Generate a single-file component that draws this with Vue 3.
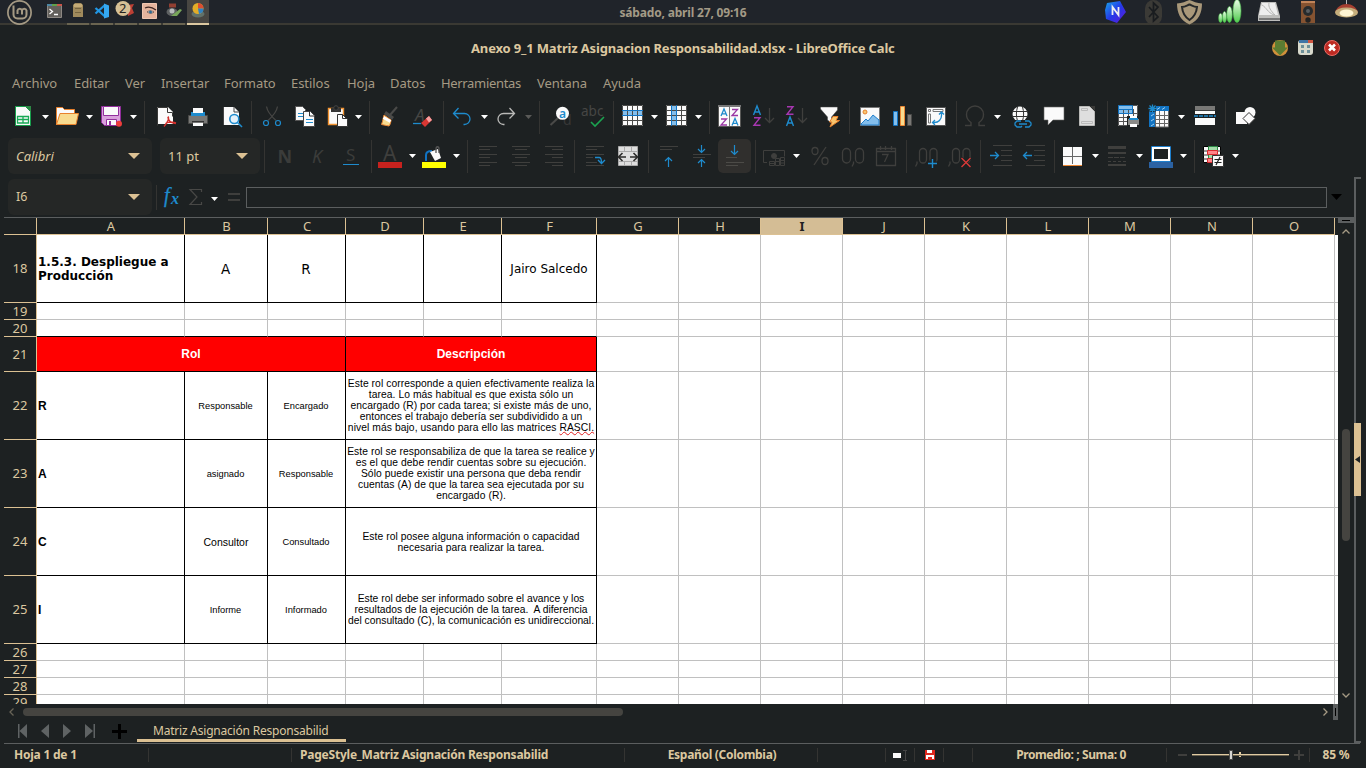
<script setup>
const t = (x, y, s, size, fill, extra = '') =>
  `<text x="${x}" y="${y}" font-family="Noto Sans, sans-serif" font-size="${size}" fill="${fill}" ${extra}>${s}</text>`
const lines = (list, color = '#3f3f3d') =>
  `<path stroke="${color}" d="${list.map(([x1, x2, y]) => `M${x1} ${y}.5H${x2}`).join('')}"/>`

const icons = {
  new: '<path fill="#fafafa" stroke="#169e4b" d="M4.500 1.500h10l5 5v14h-15z"/><path fill="#2d8a46" d="M14 1h6v6z"/><path fill="none" stroke="#18a955" stroke-width="1.300" d="M6.500 11.500h11v6.500h-11zM6.500 14.500h11M12 11.500v6.500"/>',
  open: '<path fill="#fafafa" stroke="#e8812c" d="M1.500 20V2.500h6l2 2h10v4"/><path fill="#f8db8f" stroke="#e8812c" d="M1.500 19.500L5 8.500h18.500L21 19.500z"/>',
  save: '<path fill="#d9a0dc" stroke="#922e9c" d="M2.500 1.500h19v19h-16l-3-3z"/><path fill="#fafafa" stroke="#922e9c" d="M4.500 1.500h15v9h-15zM7.500 14.500h10v6h-10z"/><path fill="#922e9c" d="M10 16h2v5h-2z"/><circle cx="20" cy="18.700" r="3" fill="#ed3d3b"/>',
  pdf: '<path fill="#fafafa" d="M4 2h11l5 5v12H4z"/><path fill="none" stroke="#3a3a38" d="M4.500 20.500v-18h10v5h5v4"/><path fill="none" stroke="#d22f2c" stroke-width="1.500" d="M15 11.500c1.500 2-.500 6-4 10M15 12c0 3.500 3 6 8 6.500M12.500 18.500c3-2 6.500-2 10.500-.500"/>',
  print: '<path fill="#fafafa" d="M7 3h10v5H7zM7 17h10v4H7z"/><path fill="#787876" stroke="#4a4a48" d="M2.500 10.500h19v8h-19z"/><path fill="#1e8bcd" d="M5 7h2v1h10V7h2v4H5z"/><path fill="#fafafa" d="M7 17.500h10V21H7z"/><path fill="#333" d="M6 16h12v1.500H6z"/>',
  preview: '<path fill="#fafafa" d="M5 2h10l5 5v13H5z"/><path fill="none" stroke="#444" d="M4.500 20v-18M15 2v5h5"/><circle cx="15.300" cy="14" r="4.500" fill="#e5f1fa" stroke="#1e8bcd" stroke-width="1.600"/><path stroke="#1e8bcd" stroke-width="1.600" d="M18.500 17.500l4.500 4.500"/>',
  cut: '<g fill="none" stroke="#464644" stroke-width="1.300"><path d="M6.500 1.500c1 6 5 10 9.500 14M17.500 1.500c-1 6-5 10-9.500 14"/></g><g fill="none" stroke="#1e8bcd" stroke-width="1.200"><circle cx="6" cy="18" r="2.500"/><circle cx="18" cy="18" r="2.500"/></g>',
  copy: '<path fill="#fafafa" stroke="#555" d="M2.500 1.500h7l3 3v11h-10z"/><path stroke="#1e8bcd" d="M5 8.500h5M5 11.500h5"/><path fill="#fafafa" stroke="#444" d="M10.500 6.500h7l4 4v11h-11z"/><path stroke="#1e8bcd" d="M13 14.500h7M13 17.500h7"/><path fill="none" stroke="#333" d="M16.500 6v5h5"/>',
  paste: '<path fill="#fafafa" stroke="#f29330" stroke-width="1.400" d="M4.500 3.500h15v16h-15z"/><path fill="#333" d="M7 3h10v4H7z"/><circle cx="12" cy="3" r="2.300" fill="#1d2122" stroke="#444"/><path fill="#fafafa" stroke="#333" d="M13.500 9.500h5l5 5v7h-10z"/><path fill="none" stroke="#333" d="M18.500 9.500v4h5"/>',
  clone: '<path stroke="#4a4a48" stroke-width="2" d="M19 2l-7 8"/><path fill="#4a4a48" d="M8 6l8 6-2 3-8-6z"/><path fill="#f8db8f" stroke="#ed8733" d="M6 10l7 5c0 2-1 5-2 6L3.500 19.500l1-3z"/><path stroke="#fff" stroke-width="3" d="M5.500 12.500l7 4"/>',
  clear: t(4, 16, 'A', 17, '#464644', 'font-style="italic"') + '<path stroke="#1e8bcd" stroke-width="1.300" d="M2 18.500h8"/><path fill="#d93733" d="M10 18l8-7 3 4-7 7z"/><path fill="#f7a0a0" d="M15 13.500l3-2.500 3 4-3 2.500z"/>',
  undo: '<path fill="none" stroke="#1e8bcd" stroke-width="1.300" d="M8.500 3L3.500 8.500l5 5M4 8.500h10.500a5.500 5.500 0 0 1 0 11h-1"/>',
  redo: '<path fill="none" stroke="#b9b9b7" stroke-width="1.300" d="M15.500 3l5 5.500-5 5M20 8.500H9.500a5.500 5.500 0 0 0 0 11h1"/>',
  find: t(15, 20, 'd', 14, '#383838') + '<path stroke="#4a4a48" stroke-width="2" d="M2.500 20L10 13"/><circle cx="14.500" cy="8.300" r="6.500" fill="#fafafa"/>' + t(11, 12.500, 'a', 12, '#1e8bcd', 'font-weight="600"'),
  spell: t(0, 11, 'abc', 13.500, '#464644') + '<path fill="none" stroke="#1ba350" stroke-width="1.600" d="M10 17l4 4 9-9"/>',
  rows: '<path fill="#fafafa" d="M2 0h21v21H2z"/><path fill="#83beec" d="M2 5h21v5H2z"/><path fill="none" stroke="#4a4a48" d="M2.500 .500h20v20h-20zM2 15.500h21M7.500 0v21M12.500 0v21M17.500 0v21"/><path fill="none" stroke="#1173c2" d="M2 5.500h21M2 10.500h21"/>',
  cols: '<path fill="#fafafa" d="M2 0h21v21H2z"/><path fill="#83beec" d="M8 0h5v21H8z"/><path fill="none" stroke="#4a4a48" d="M2.500 .500h20v20h-20zM2 5.500h21M2 10.500h21M2 15.500h21M17.500 0v21"/><path fill="none" stroke="#1173c2" d="M7.500 0v21M12.500 0v21"/>',
  sort: '<path fill="#fafafa" stroke="#595957" d="M.500 .500h22v21h-22z"/><path stroke="#777" stroke-width="2" d="M0 1h23"/><path stroke="#777" d="M11.500 1v20"/><g fill="none" stroke-width="1.300"><path stroke="#1e8bcd" d="M3 11l3-7 3 7M4 8.800h4M14 20.500l3-7 3 7M15 18.300h4"/><path stroke="#9a37a4" d="M14 4.500h5.500L14 10.500h6M3 14h5.500L3 20h6"/></g>',
  az: '<path fill="none" stroke="#1e8bcd" stroke-width="1.400" d="M2.500 10L6 1l3.500 9M3.500 7h5"/><path fill="none" stroke="#a737b1" stroke-width="1.400" d="M3 12.700h6L3 20.300h6.500"/><path fill="none" stroke="#3f3f3d" stroke-width="1.300" d="M18.500 3v14.500M14 13l4.500 4.500L23 13"/>',
  za: '<path fill="none" stroke="#a737b1" stroke-width="1.400" d="M3 1.700h6L3 9.300h6.500"/><path fill="none" stroke="#1e8bcd" stroke-width="1.400" d="M2.500 21L6 12l3.500 9M3.500 18h5"/><path fill="none" stroke="#3f3f3d" stroke-width="1.300" d="M18.500 3v14.500M14 13l4.500 4.500L23 13"/>',
  filter: '<path fill="#fafafa" stroke="#444" stroke-width=".500" d="M3.500 2h17v3l-6 7v6l-4-3v-3l-7-8z"/><path fill="#f8c66f" stroke="#e8812c" d="M16 11.500h5l-2 4h3.500L13 22l2-5h-2.500z"/>',
  image: '<path fill="#fafafa" stroke="#777" d="M2.500 2.500h19v18h-19z"/><circle cx="7" cy="7" r="2" fill="#f8c66f" stroke="#e8812c"/><path fill="#83beec" stroke="#1e7fcd" d="M3 19l5-5 2 2 5-6 6 5v5H3z"/>',
  chart: '<path fill="#83beec" stroke="#1173c2" d="M2.500 6.500h4v14h-4z"/><path fill="#f8db8f" stroke="#ed8733" d="M9.500 1.500h4v19h-4z"/><path fill="#797774" stroke="#4a4a48" d="M16.500 9.500h4v11h-4z"/>',
  pivot: '<path fill="#fafafa" stroke="#555" d="M2.500 2.500h19v18h-19z"/><path fill="none" stroke="#777" d="M4.500 4.500h2v2h-2zM9 4.500h10v2H9zM4.500 9v9h2V9z"/><path fill="none" stroke="#1e8bcd" stroke-width="1.300" d="M15 9.500l2.500-2.500 2.500 2.500M17.500 7.500v3c0 4-3 7-7 7h-2M11 15l-2.500 2.500L11 20"/>',
  omega: '<path fill="none" stroke="#3f3f3d" stroke-width="1.400" d="M2 20.500h6v-3c-3-2-4.500-5-4.500-8a8.500 8.500 0 0 1 17 0c0 3-1.500 6-4.500 8v3h6"/>',
  link: '<circle cx="11" cy="9" r="7.500" fill="#fafafa"/><path fill="none" stroke="#333" d="M3 6.500h16M3 11.500h16M8.500 2c-1.500 5-1.500 9 0 14M13.500 2c1.500 5 1.500 9 0 14"/><path fill="#1d2122" d="M4 15h20v8H4z"/><path fill="none" stroke="#1e8bcd" stroke-width="1.300" d="M12 16H8l-2 2v2l2 2h4l1-1M16 16h4l2 2v2l-2 2h-4M10 19h8"/>',
  comment: '<path fill="#fafafa" stroke="#666" stroke-width=".600" d="M2 2h20v13H11l-5 5v-5H2z"/>',
  header: '<path fill="#dedede" stroke="#b9b9b7" d="M4.500 1.500h10l5 5v14h-15z"/><path fill="none" stroke="#bbb" d="M6.500 3.500h6v2h-6zM6.500 16.500h11v2h-11z"/><path fill="#3a3a38" d="M15 1h5v5z"/>',
  range: '<path fill="#fafafa" d="M2 0h20v21H2z"/><path fill="#83beec" d="M2 0h15v9H2z"/><path fill="none" stroke="#555" d="M2.500 .500h19v20h-19zM2 8.500h20M2 12.500h20M2 16.500h20M7.500 4v16M12.500 4v16M17.500 4v16"/><path fill="none" stroke="#1173c2" d="M2.500 8.500v-8h14v8zM2 4.500h15"/><path fill="#1d2122" d="M11 11h13v12H11z"/><path fill="#8a8a88" d="M12 14h11v6H12z"/><path fill="#fff" d="M14 11h7v3h-7zM14 19h7v3h-7z"/><path fill="#1e8bcd" d="M13 13h9v2h-9z"/>',
  freeze: '<path fill="#fafafa" d="M2 1h20v21H2z"/><path fill="#1173c2" d="M8 1h14v5H8zM2 7h6v15H2z"/><path fill="none" stroke="#666" d="M8 10.500h14M8 14.500h14M8 18.500h14M12.500 6v16M17.500 6v16M8.500 6v16h13V6"/><path fill="none" stroke="#9fceef" d="M10 4.500l3-2M15 4.500l3-2M4 11l3-2M4 16l3-2M4 21l3-2"/><path fill="#1d2122" d="M1 0h8v7H1z"/><path fill="none" stroke="#1e8bcd" stroke-width="1.300" d="M5.500-.500v8M1.500 3.500h8M2.500 .500l6 6M8.500 .500l-6 6"/>',
  split: '<path fill="#fafafa" d="M2 1h20v19H2z"/><path fill="#787876" d="M2 1h20v4H2z"/><path fill="none" stroke="#444" d="M2 5.500h20"/><path fill="#1d2122" d="M2 9h20v4H2z"/><path stroke="#1e8bcd" stroke-width="1.300" stroke-dasharray="4 1" d="M1 11h22"/>',
  shapes: '<circle cx="16" cy="7.500" r="5.500" fill="#fafafa"/><path fill="#fafafa" d="M2 7h11v12H2z"/><path fill="#fafafa" stroke="#333" d="M15 7.500l6 6-6 6-6-6z"/>',

  bold: t(4.500, 18.500, 'N', 18, '#3b3c3a', 'font-weight="bold"'),
  italic: t(6, 18.500, 'K', 18, '#3b3c3a', 'font-style="italic"'),
  underline: t(7, 17, 'S', 17, '#3b3c3a') + '<path stroke="#1e8bcd" d="M4 20.500h16"/>',
  color: t(5, 17, 'A', 21, '#3f3f3d') + '<path fill="#c7221e" d="M0 18h24v6H0z"/>',
  fill: '<path fill="#ffff00" d="M0 18h24v6H0z"/><path fill="none" stroke="#1173c2" stroke-width="2" d="M4 17v-6c0-3 2-4 6-4"/><path fill="#fafafa" d="M8 8l8-3 3 9-6 3z"/><path fill="none" stroke="#555" stroke-width="1.300" d="M14 9V5c0-3 3-3 3 0v4"/>',
  left: lines([[3, 21, 2], [3, 14, 5], [3, 21, 10], [3, 14, 13], [3, 21, 18], [3, 14, 21]]),
  center: lines([[3, 21, 2], [6, 18, 5], [3, 21, 10], [6, 18, 13], [3, 21, 18], [6, 18, 21]]),
  right: lines([[3, 21, 2], [10, 21, 5], [3, 21, 10], [10, 21, 13], [3, 21, 18], [10, 21, 21]]),
  wrap: lines([[3, 21, 2], [3, 14, 5], [3, 21, 10], [3, 10, 13], [3, 14, 18], [3, 21, 21]]) + '<path fill="none" stroke="#1e8bcd" stroke-width="1.300" d="M12 13.500h4c2 0 2.500 2 2.500 5M15 16l3.500 3.500L22 16"/>',
  merge: '<path fill="#dedede" stroke="#aaa" d="M2.500 2.500h19v19h-19z"/><path fill="none" stroke="#aaa" d="M2 7.500h20M2 17.500h20M8.500 2v5M15.500 2v5M8.500 17v5M15.500 17v5"/><path fill="none" stroke="#2c2c2b" stroke-width="1.600" d="M2.500 13h7.500M14 13h7.500M6.500 9l-4 4 4 4M17.500 9l4 4-4 4"/>',
  top: lines([[3, 21, 2], [3, 15, 5]]) + '<path fill="none" stroke="#1e8bcd" stroke-width="1.200" d="M11.500 23V13.500M8 17l3.500-3.500L15 17"/>',
  middle: lines([[3, 21, 10], [3, 15, 13]]) + '<path fill="none" stroke="#1e8bcd" stroke-width="1.200" d="M11.500 1v7.500M8 5l3.500 3.500L15 5M11.500 23v-7.500M8 19l3.500-3.500L15 19"/>',
  bottom: lines([[3, 14, 13], [3, 21, 18], [3, 15, 21]], '#4c4b47') + '<path fill="none" stroke="#1e8bcd" stroke-width="1.200" d="M11.500 1v9.500M8 7l3.500 3.500L15 7"/>',
  money: '<g fill="none" stroke="#3f3f3d"><path d="M5 18.500H1.500v-12h21v6"/><circle cx="12" cy="12" r="2.500" fill="#3f3f3d"/><path d="M7.500 17.500v4h5v-4zM7.500 19.500h5M13.500 14.500v7h4v-7zM13.500 17.500h4M18.500 13.500v8h4v-8zM18.500 16.500h4M18.500 19h4"/></g>',
  percent: '<g fill="none" stroke="#3f3f3d" stroke-width="1.300"><ellipse cx="7" cy="7" rx="3" ry="3.500"/><ellipse cx="17" cy="17" rx="3" ry="3.500"/><path d="M18 3L6 21"/></g>',
  decimal: '<g fill="none" stroke="#3f3f3d" stroke-width="1.300"><rect x="1.500" y="4.500" width="8" height="14.500" rx="4"/><rect x="14.500" y="4.500" width="8" height="14.500" rx="4"/><path d="M12.500 17.500v2l-1.500 3"/></g>',
  date: '<g fill="none" stroke="#3f3f3d" stroke-width="1.300"><path d="M2.500 4.500h19v17h-19zM2 7.500h20M6.500 2v4M11.500 2v4M17.500 2v4M8 10.500h6L10.500 18"/></g>',
  addDec: '<g fill="none" stroke="#3f3f3d" stroke-width="1.300"><rect x="4.500" y="4.500" width="7" height="14.500" rx="3.500"/><rect x="15" y="4.500" width="7" height="14.500" rx="3.500"/><path d="M2 17.500v2L.500 22.500"/></g><path stroke="#1d2122" stroke-width="4" d="M17.500 15v9M13 19.500h9"/><path stroke="#1e8bcd" stroke-width="1.400" d="M17.500 15v9M13 19.500h9"/>',
  delDec: '<g fill="none" stroke="#3f3f3d" stroke-width="1.300"><rect x="4.500" y="4.500" width="7" height="14.500" rx="3.500"/><rect x="15" y="4.500" width="7" height="14.500" rx="3.500"/><path d="M2 17.500v2L.500 22.500"/></g><path stroke="#1d2122" stroke-width="3" d="M13.500 14l9 9M22.500 14l-9 9"/><path stroke="#d93a38" stroke-width="1.400" d="M13.500 14l9 9M22.500 14l-9 9"/>',
  indent: lines([[4, 23, 1], [12, 23, 6], [12, 23, 11], [12, 23, 16], [4, 23, 21]]) + '<path fill="none" stroke="#1e8bcd" stroke-width="1.300" d="M1 11.500h8.500M6 8l3.500 3.500L6 15"/>',
  outdent: lines([[4, 23, 1], [12, 23, 6], [12, 23, 11], [12, 23, 16], [4, 23, 21]]) + '<path fill="none" stroke="#1e8bcd" stroke-width="1.300" d="M10 11.500H1.500M5 8l-3.500 3.500L5 15"/>',
  borders: '<path fill="#fafafa" d="M2 3h19v18H2z"/><path stroke="#666" d="M11.500 3v17M2 12.500h19"/><path fill="#ed8733" d="M2 21h19v1H2z"/>',
  lineStyle: '<path fill="#3f3f3d" d="M3 2h18v3H3zM3 8h18v2H3zM3 20h18v2H3z"/><path stroke="#3f3f3d" stroke-dasharray="5 1" d="M3 13.500h18"/><path stroke="#3f3f3d" stroke-dasharray="3 2" d="M3 17.500h18"/>',
  borderColor: '<path fill="none" stroke="#1e7fcd" d="M2.500 2.500h19v15h-19z"/><path fill="none" stroke="#fff" stroke-width="2" d="M4 4h16v12H4z"/><path fill="#2b62a3" d="M0 18h24v6H0z"/>',
  cond: '<path fill="#fafafa" stroke="#000" d="M2.500 2.500h17v16h-17z"/><path fill="none" stroke="#333" d="M2 7h18M2 11h18M2 15h18"/><path fill="#a3dba9" stroke="#2d8a46" d="M7.500 2.500h9v4h-9zM7.500 10.500h5v4h-5z"/><path fill="#ff8589" stroke="#d92a2f" d="M6.500 6.500h10v4h-10zM6.500 14.500h5v4h-5z"/><path fill="#fafafa" stroke="#333" d="M11.500 11.500h11v11h-11z"/><path stroke="#222" stroke-width="1.200" d="M13.500 15.500h7M13.500 18.500h7M19 13l-4 8"/>',
}

const mainBar = 'new+ open+ save+ | pdf print preview | cut copy paste+ | clone clear | undo+ redo- | find spell | rows+ cols+ | sort az za filter | image chart pivot | omega+ link comment header | range freeze+ split | shapes'
const formatBar = '| bold italic underline | color+ fill+ | left center right | wrap merge | top middle bottom* | money+ percent decimal date | addDec delDec | indent outdent | borders+ lineStyle+ borderColor+ | cond+'
const parse = (s) =>
  s.split(' ').map((token) => ({
    name: token.replace(/[+\-*]$/, ''),
    sep: token === '|',
    drop: /[+-]$/.test(token),
    dim: token.endsWith('-'),
    active: token.endsWith('*'),
  }))
const mainTools = parse(mainBar)
const formatTools = parse(formatBar)

const menus = ['Archivo', 'Editar', 'Ver', 'Insertar', 'Formato', 'Estilos', 'Hoja', 'Datos', 'Herramientas', 'Ventana', 'Ayuda']
const columns = 'ABCDEFGHIJKLMNO'.split('')

const c = (text = '', cls = '', span = 1) => ({ text, cls, span })
const rows = [
  { n: 18, h: 'tall', cells: [c('1.5.3. Despliegue a\nProducción', 'k name dj'), c('A', 'k big'), c('R', 'k big'), c('', 'k'), c('', 'k'), c('Jairo Salcedo', 'k person')] },
  { n: 19, h: 'short', cells: [c(), c(), c(), c(), c(), c()] },
  { n: 20, h: 'short', cells: [c('', 'kb'), c('', 'kb'), c('', 'kb'), c('', 'kb'), c('', 'kb'), c('', 'kb')] },
  { n: 21, h: 'head', cells: [c('Rol', 'k red', 3), c('Descripción', 'k red', 3)] },
  { n: 22, h: 'tall', cells: [c('R', 'k name'), c('Responsable', 'k small'), c('Encargado', 'k small'), { cls: 'k desc', span: 3, lines: ['Este rol corresponde a quien efectivamente realiza la', 'tarea. Lo más habitual es que exista sólo un', 'encargado (R) por cada tarea; si existe más de uno,', 'entonces el trabajo debería ser subdividido a un', 'nivel más bajo, usando para ello las matrices '], tail: 'RASCI.' }] },
  { n: 23, h: 'tall', cells: [c('A', 'k name'), c('asignado', 'k small'), c('Responsable', 'k small'), { cls: 'k desc', span: 3, lines: ['Este rol se responsabiliza de que la tarea se realice y', 'es el que debe rendir cuentas sobre su ejecución.', 'Sólo puede existir una persona que deba rendir', 'cuentas (A) de que la tarea sea ejecutada por su', 'encargado (R).'] }] },
  { n: 24, h: 'tall', cells: [c('C', 'k name'), c('Consultor', 'k mid'), c('Consultado', 'k small'), { cls: 'k desc', span: 3, lines: ['Este rol posee alguna información o capacidad', 'necesaria para realizar la tarea.'] }] },
  { n: 25, h: 'tall', cells: [c('I', 'k name'), c('Informe', 'k small'), c('Informado', 'k small'), { cls: 'k desc snug', span: 3, lines: ['Este rol debe ser informado sobre el avance y los', 'resultados de la ejecución de la tarea.  A diferencia', 'del consultado (C), la comunicación es unidireccional.'] }] },
  { n: 26, h: 'short', cells: [c(), c(), c(), c(), c(), c()] },
  { n: 27, h: 'short', cells: [c(), c(), c(), c(), c(), c()] },
  { n: 28, h: 'short', cells: [c(), c(), c(), c(), c(), c()] },
  { n: 29, h: 'cutoff', cells: [c(), c(), c(), c(), c(), c()] },
]
</script>

<template>
  <div class="desktop">
    <header class="panel">
      <svg class="mint" viewBox="0 0 28 26"><g fill="none" stroke="#a59a84"><circle cx="13.500" cy="12.500" r="11.600" stroke-width="1.700" /><path stroke-width="2" d="M7.500 5.500v9a4 4 0 0 0 4 4h5a4 4 0 0 0 4-4v-4a2.300 2.300 0 0 0-4.500 0v4M16 14v-3.500a2.300 2.300 0 0 0-4.500 0V14" /></g></svg>
      <div class="tasks">
        <span class="task plain"><svg viewBox="0 0 22 23"><path fill="#63605c" stroke="#8d8883" d="M4.500 4.500h14v13h-14z" /><path fill="#4c86a3" d="M4 4h5v2H4z" /><path fill="#61a04a" d="M9 4h5v2H9z" /><path fill="#c9554a" d="M14 4h5v2h-5z" /><path fill="none" stroke="#fff" stroke-width="1.300" d="M6.500 9l3 2.500-3 2.500M11 14.500h4" /></svg></span>
        <span class="task"><svg viewBox="0 0 22 23"><path fill="#a08a5c" d="M6 5l2-2h6l2 2v12H6z" /><path fill="#c4ab77" d="M7 4h8v3H7z" /><path stroke="#75643f" d="M8 8.500h6M8 12.500h6" /></svg></span>
        <span class="task"><svg viewBox="0 0 22 23"><path fill="none" stroke="#2196e3" stroke-width="2.300" d="M14 5L4.500 13.500M4.500 8L14 16.500" /><path fill="#35a8f2" d="M13 3.500L18 5.500v11.500l-5 1.500z" /></svg></span>
        <span class="task"><svg viewBox="0 0 22 23"><path fill="#bd3f34" d="M12 5l7-1-2 4 2 5-6 3z" /><circle cx="8" cy="8.500" r="7.500" fill="#d6c096" /></svg><b class="count">2</b></span>
        <span class="task"><svg viewBox="0 0 22 23"><path fill="#e5b49d" stroke="#f0c6b0" d="M3.500 3.500h14v15h-14z" /><path fill="none" stroke="#3d2521" stroke-width="1.300" d="M6 8c3-1.500 7-1 11 2" /><path fill="#fff" stroke="#4b342e" stroke-width=".700" d="M8 12c3-2 5-1 7 0-3 2-5 1-7 0z" /><circle cx="11.500" cy="12" r="1.500" fill="#2d6a90" /></svg></span>
        <span class="task"><svg viewBox="0 0 22 23"><path fill="#913f32" d="M6 3.500h7v4H6z" /><ellipse cx="9" cy="12" rx="5.500" ry="4" fill="#5e6162" /><circle cx="9" cy="11" r="2.500" fill="#b9bdbd" /><path fill="#78a65a" d="M8 16l9-7 2 1-5 6z" /></svg></span>
        <span class="task open"><svg viewBox="0 0 22 23"><ellipse cx="11" cy="14" rx="6.500" ry="3.500" fill="#61716a" /><circle cx="11" cy="8.500" r="5.500" fill="#e2ad27" /><path fill="#dc4d31" d="M11 3a5.500 5.500 0 0 1 5.500 5.500H11z" /><path fill="#2f81c2" d="M16.500 8.500A5.500 5.500 0 0 1 12 14l-1-5.500z" /></svg></span>
      </div>
      <div class="clock">sábado, abril 27, 09:16</div>
      <svg class="tray" viewBox="0 0 262 24">
        <defs>
          <linearGradient id="pent" x2="1" y2="1"><stop stop-color="#18a7e8" /><stop offset=".5" stop-color="#2538e8" /><stop offset="1" stop-color="#6318d8" /></linearGradient>
          <linearGradient id="sig" y2="1" x2="0"><stop stop-color="#ecfbe9" /><stop offset="1" stop-color="#4ecb4c" /></linearGradient>
        </defs>
        <path fill="url(#pent)" d="M7 3l13-2 6 11-9 11-11-4-1-9z" /><path fill="none" stroke="#eee" stroke-width="1.800" d="M12.500 15V7l6 8V7" />
        <rect x="45" y="0" width="17" height="25" rx="8.500" fill="#3b3a36" /><path fill="none" stroke="#191c1f" stroke-width="1.700" d="M49 7l9 10-4.500 4V3l4.500 4-9 10" />
        <path fill="#a9987a" d="M77 3.500C82 3 86 1.500 89.500 0c3.500 1.500 7.500 3 12.500 3.500 0 9-3 17-12.500 21C80 20.500 77 12.500 77 3.500z" /><path fill="#a9987a" stroke="#25282a" stroke-width="2" d="M82 7c3 0 5-1.500 7.500-2.500C92 5.500 94 7 97 7c-.500 6-3 10-7.500 13C85 17 82.500 13 82 7z" />
        <g fill="url(#sig)" stroke="#48bd49" stroke-width=".600"><ellipse cx="120.500" cy="18" rx="1.800" ry="4.500" /><ellipse cx="124.500" cy="17" rx="2" ry="5.500" /><ellipse cx="129.500" cy="14.500" rx="2.700" ry="8" /><ellipse cx="137" cy="11" rx="4" ry="11.500" /></g>
        <path fill="#bdbdbb" d="M161 2h15l4 14v5h-22v-5z" /><path fill="#eee" d="M162 3h13l3 12h-19z" /><path fill="none" stroke="#b5b5b3" d="M162 5c5 3 5 7 12 10M169 3c-1 4 2 8 6 12" /><path fill="#777" d="M159 18h21v2h-21z" />
        <path fill="#855331" d="M201 1h14v22h-14z" /><path fill="#c18459" d="M201 1h14v2h-14z" /><circle cx="208" cy="11" r="5" fill="#272b2d" /><circle cx="208" cy="11" r="2" fill="#585d60" /><circle cx="208" cy="20" r="2.700" fill="#222" />
        <path stroke="#bbb" d="M246.500 0v5" /><path fill="#a53f31" d="M235 12c2-5 6-8 11.500-8S256 7 258 12z" /><ellipse cx="246.500" cy="12.500" rx="11.500" ry="5" fill="#c4ad7b" /><ellipse cx="246.500" cy="13" rx="7" ry="3.500" fill="#fff5d3" />
      </svg>
    </header>

    <div class="titlebar">
      <span class="title">Anexo 9_1 Matriz Asignacion Responsabilidad.xlsx - LibreOffice Calc</span>
      <svg class="winbtns" viewBox="0 0 72 18">
        <circle cx="9" cy="9" r="8" fill="#d2913b" /><path fill="#5b7d32" d="M4 1.500h10v7h3L9 16.500 1 8.500h3z" />
        <rect x="27" y="1" width="15" height="15" rx="3" fill="#d8d9cc" /><path fill="#3f75a6" d="M28 1h9v3h-9z" /><path fill="#cf5540" d="M37 1h5v3h-5z" /><path fill="#6d9099" d="M30 6h3v3h-3zM36 6h3v3h-3zM30 11h3v3h-3zM36 11h3v3h-3z" />
        <circle cx="61" cy="9" r="7.500" fill="#bd2a22" stroke="#ea6a64" /><path stroke="#fff" stroke-width="2.600" d="M58 5.500l6 6M64 5.500l-6 6" />
      </svg>
    </div>

    <nav class="menubar">
      <span v-for="m in menus" :key="m" :class="{ tight: m.length > 8 }">{{ m }}</span>
    </nav>

    <div class="toolbar main">
      <template v-for="(b, i) in mainTools" :key="i">
        <i v-if="b.sep" class="sep"></i>
        <span v-else class="tool" :class="{ drop: b.drop }">
          <svg class="icon" viewBox="0 0 24 24" v-html="icons[b.name]"></svg>
          <i v-if="b.drop" class="arrow" :class="{ dim: b.dim }"></i>
        </span>
      </template>
    </div>

    <div class="toolbar format">
      <div class="combo font"><em>Calibri</em><i class="caret"></i></div>
      <div class="combo size"><span>11 pt</span><i class="caret"></i></div>
      <template v-for="(b, i) in formatTools" :key="i">
        <i v-if="b.sep" class="sep"></i>
        <span v-else class="tool" :class="{ drop: b.drop, active: b.active }">
          <svg class="icon" viewBox="0 0 24 24" v-html="icons[b.name]"></svg>
          <i v-if="b.drop" class="arrow"></i>
        </span>
      </template>
    </div>

    <div class="workspace">
      <div class="document">
        <div class="formula">
          <div class="combo ref"><span>I6</span><i class="caret"></i></div>
          <i class="fsep"></i>
          <svg class="ftools" viewBox="0 0 84 36">
            <text x="6" y="23" font-family="Liberation Serif, serif" font-style="italic" font-size="20" fill="#1e8bcd" stroke="#1e8bcd" stroke-width=".3">f</text>
            <text x="13" y="25" font-family="Liberation Serif, serif" font-style="italic" font-weight="bold" font-size="16" fill="#1e8bcd">x</text>
            <path fill="none" stroke="#484846" stroke-width="1.200" d="M43.500 13v-2.500H32l7 7.500-7 7.500h11.500V23" />
            <path fill="#fff" d="M53 18h7l-3.500 4z" />
            <path fill="#3f3f3d" d="M70 14h12v2H70zM70 20h12v2H70z" />
          </svg>
          <div class="input"></div>
          <i class="expand"></i>
        </div>

        <div class="sheet">
          <div class="grid">
            <div class="line heads">
              <div class="rowhead"></div>
              <div v-for="col in columns" :key="col" class="colhead" :class="{ current: col === 'I' }">{{ col }}</div>
            </div>
            <div v-for="r in rows" :key="r.n" class="line" :class="r.h">
              <div class="rowhead">{{ r.n }}</div>
              <div v-for="(cell, i) in r.cells" :key="i" class="cell" :class="[cell.cls, { wide: cell.span === 3 }]">
                <div v-if="cell.lines">
                  <div v-for="(l, j) in cell.lines" :key="j" class="tl">{{ l }}<span v-if="cell.tail && j === cell.lines.length - 1" class="typo">{{ cell.tail }}</span></div>
                </div>
                <span v-else>{{ cell.text }}</span>
              </div>
              <div v-for="k in 9" :key="'e' + k" class="cell"></div>
              <div class="cell last"></div>
            </div>
          </div>
          <div class="vscroll">
            <i class="splitter"></i>
            <svg viewBox="0 0 8 5"><path d="M.5 4.500L4 1l3.500 3.500" /></svg>
            <i class="vthumb"></i>
            <svg viewBox="0 0 8 5"><path d="M.5 .5L4 4 7.500 .5" /></svg>
          </div>
        </div>

        <div class="hscroll">
          <svg class="hl" viewBox="0 0 5 8"><path d="M4.500 .5L1 4l3.500 3.500" /></svg>
          <i class="hthumb"></i>
          <svg class="hr" viewBox="0 0 5 8"><path d="M.5 .5L4 4 .5 7.500" /></svg>
          <i class="hsplit"></i>
        </div>

        <div class="tabs">
          <svg viewBox="0 0 116 16">
            <g fill="#5f6364"><path d="M4 1h1.500v14H4zM13 1v14L5.500 8zM35 1v14L27 8zM49 1v14l8-7zM71 1v14l8-7zM79.500 1H81v14h-1.500z" /></g>
            <path fill="#000" d="M98 7h15v3H98zM104 1h3v15h-3z" />
          </svg>
          <div class="tab">Matriz Asignación Responsabilid</div>
        </div>
      </div>
      <aside class="sidebar"><div class="handle"><i></i></div></aside>
    </div>

    <footer class="status">
      <span class="s1">Hoja 1 de 1</span>
      <span class="s2"></span>
      <span class="s3">PageStyle_Matriz Asignación Responsabilid</span>
      <span class="s4">Español (Colombia)</span>
      <span class="s5"></span>
      <span class="s6"><svg viewBox="0 0 16 11"><path fill="#fafafa" d="M1 3h8v5H1z" /><path fill="none" stroke="#444" d="M11 .5h4M13.500 .5v10M11 10.500h4" /></svg></span>
      <span class="s7"><svg viewBox="0 0 10 10"><path fill="#e0291f" d="M0 0h10v10H0z" /><path fill="#fff" d="M2 0h5v3H2zM1 5h8v4H7V7H3v2H1z" /></svg></span>
      <span class="s8"></span>
      <span class="s9">Promedio: ; Suma: 0</span>
      <span class="s10">
        <svg viewBox="0 0 141 18"><path fill="#3f3f3d" d="M10 8h9v2h-9zM126 8h10v2h-10zM130 4h2v10h-2z" /><path fill="#e0cba2" d="M24 8h97v1H24zM71 6h2v5h-2z" /><path fill="#6a6250" d="M24 9h97v1H24z" /><path fill="#d6d6d3" stroke="#4a4a48" d="M61.500 4.500h3v9h-3z" /></svg>
      </span>
      <span class="s11">85 %</span>
    </footer>
  </div>
</template>

<style>
html, body { margin: 0; background: #1d2122; overflow: hidden; }
</style>

<style scoped>
.desktop { width: 1366px; height: 768px; display: flex; flex-direction: column; background: #1d2122; color: #dcc8a0; font: 12.500px/16px "Noto Sans", sans-serif; overflow: hidden; }
.desktop * { box-sizing: border-box; }
svg { display: block; overflow: visible; flex: none; }
i { display: block; flex: none; }

.panel { height: 25px; flex: none; display: flex; background: #20242a; border-bottom: 2px solid #3a3933; }
.mint { width: 28px; height: 26px; margin-left: 6px; }
.tasks { display: flex; gap: 2px; margin-left: 9px; }
.task { position: relative; width: 22px; height: 25px; border-bottom: 2px solid #6a6450; }
.task.plain { border-color: transparent; }
.task.open { background: #484642; border-color: #dcc8a0; }
.task svg { width: 22px; height: 23px; }
.count { position: absolute; left: 4px; top: 0; color: #26241f; font-weight: 400; font-size: 13px; }
.clock { width: 128px; margin-left: 410px; height: 25px; line-height: 25px; text-align: center; color: #a39a86; font-weight: 700; font-size: 12px; letter-spacing: -0.180px; white-space: nowrap; }
.tray { width: 262px; height: 24px; margin-left: 353px; }

.titlebar { height: 47px; flex: none; display: flex; align-items: center; }
.title { width: 424px; margin-left: 471px; font-weight: 700; font-size: 13px; letter-spacing: -0.160px; white-space: nowrap; padding-bottom: 2px; }
.winbtns { width: 72px; height: 18px; margin-left: 376px; margin-bottom: 1px; }

.menubar { height: 25px; flex: none; display: grid; grid-template-columns: 62px 51px 36px 63px 67px 56px 43px 51px 96px 66px 50px; padding: 3px 0 0 12px; color: #a59a84; font-size: 13px; letter-spacing: -0.050px; }
.menubar span { white-space: nowrap; }
.menubar .tight { letter-spacing: -0.330px; }

.toolbar { display: flex; flex: none; align-items: center; padding-left: 8px; }
.main { height: 40px; }
.format { height: 38px; }
.tool { width: 33px; height: 34px; flex: none; display: flex; align-items: center; padding-left: 5px; border-radius: 5px; }
.tool.drop { width: 44px; padding-left: 3px; }
.tool.active { background: #302f2d; }
.icon { width: 24px; height: 24px; }
.arrow { width: 7px; height: 4px; margin-left: 7px; background: #fff; clip-path: polygon(0 0, 100% 0, 50% 100%); }
.arrow.dim { background: #5a5a58; }
.sep { width: 8px; height: 33px; background: linear-gradient(#343432, #343432) 4px 0 / 1px 100% no-repeat; }
.combo { height: 36px; flex: none; background: #252726; border-radius: 6px; display: flex; align-items: center; justify-content: space-between; padding: 0 12px 0 8px; }
.font { width: 144px; font-size: 13px; }
.size { width: 100px; margin-left: 8px; font-size: 13px; }
.caret { width: 12px; height: 6px; background: #dcc193; clip-path: polygon(0 0, 100% 0, 50% 100%); }

.workspace { height: 568px; flex: none; display: flex; }
.document { width: 1354px; display: flex; flex-direction: column; }
.formula { height: 42px; flex: none; display: flex; align-items: center; padding: 2px 0 0 8px; }
.ref { width: 144px; }
.fsep { width: 1px; height: 25px; margin: 0 4px; background: #343432; }
.ftools { width: 84px; height: 36px; margin-right: 1px; margin-left: -3px; }
.input { width: 1081px; height: 21px; border: 1px solid #5b5e5f; margin-left: 3px; }
.expand { width: 11px; height: 6px; margin-left: 4px; background: #000; clip-path: polygon(0 0, 100% 0, 50% 100%); }

.sheet { display: flex; height: 487px; flex: none; border-top: 1px solid #5b5e5f; margin-left: 4px; overflow: hidden; }
.grid { width: 1334px; flex: none; }
.line { display: grid; grid-template-columns: 33px 148px 83px repeat(3, 78px) 95px repeat(9, 82px) 3px; grid-template-rows: 100%; }
.heads { height: 17px; }
.tall { height: 68px; }
.short { height: 17px; }
.head { height: 35px; }
.cutoff { height: 9px; overflow: hidden; }
.rowhead, .colhead { border-right: 1px solid #dcc193; border-bottom: 1px solid #dcc193; display: flex; align-items: center; justify-content: center; font-size: 13px; line-height: 15px; min-height: 0; }
.cutoff .rowhead { align-items: flex-start; border-bottom: 0; }
.colhead { padding-left: 1px; }
.current { background: #d4bd95; color: #1d2122; font-weight: 700; }
.cell { background: #fff; color: #000; border-right: 1px solid #c0c0c0; border-bottom: 1px solid #c0c0c0; display: flex; align-items: center; justify-content: center; text-align: center; font-family: "Liberation Sans", Arial, sans-serif; min-width: 0; min-height: 0; }
.cutoff .cell { border-bottom: 0; }
.cell.last { border-right: 0; }
.wide { grid-column: span 3; }
.cell.k { border-color: #000; }
.cell.kb { border-bottom-color: #000; }
.name { justify-content: flex-start; text-align: left; font-weight: 700; font-size: 12px; padding-left: 1px; white-space: pre; }
.dj { font: 700 12px/14px "DejaVu Sans", sans-serif; }
.big { font: 13.500px/16px "DejaVu Sans", sans-serif; padding-right: 1px; }
.person { font: 12px/14px "DejaVu Sans", sans-serif; }
.red { background: #f00; color: #fff; font-weight: 700; font-size: 12px; }
.small { font-size: 9.300px; padding-right: 1px; }
.mid { font-size: 10.500px; }
.desc { font-size: 10.300px; line-height: 11px; letter-spacing: 0.070px; }
.snug { letter-spacing: 0.010px; }
.tl { white-space: pre; }
.typo { text-decoration: underline wavy #e02020 1px; text-underline-offset: 0; text-decoration-skip-ink: none; }

.vscroll { width: 16px; display: flex; flex-direction: column; align-items: center; }
.vscroll svg { width: 8px; height: 5px; }
.vscroll path, .hscroll path { fill: none; stroke: #a59a84; stroke-width: 1.300; }
.splitter { width: 16px; height: 5px; border: solid #5b5e5f; border-width: 2px 4px; background: #000; margin-bottom: 6px; }
.vthumb { width: 8px; height: 112px; border-radius: 4px; background: #454440; margin: 195px 0 152px; }

.hscroll { height: 16px; flex: none; display: flex; align-items: center; padding-left: 9px; }
.hscroll svg { width: 5px; height: 8px; }
.hl { opacity: .55; }
.hthumb { width: 600px; height: 8px; border-radius: 4px; background: #454440; margin-left: 9px; }
.hr { margin-left: 700px; }
.hsplit { width: 5px; height: 16px; margin-left: 5px; border: solid #5b5e5f; border-width: 4px 2px; background: #000; }
.tabs { height: 23px; flex: none; display: flex; margin-left: 4px; }
.tabs svg { width: 116px; height: 16px; margin: 3px 0 0 10px; }
.tab { width: 209px; height: 22px; margin-left: 7px; padding: 3px 0 0 16px; line-height: 15px; border-bottom: 3px solid #dcc193; font-size: 12px; letter-spacing: -0.210px; white-space: nowrap; }
.sidebar { width: 8px; height: 566px; margin-top: 2px; border-left: 2px solid #5b5e5f; background: linear-gradient(#5b5e5f, #5b5e5f) 0 0 / 5px 2px no-repeat, linear-gradient(#5b5e5f, #5b5e5f) 0 100% / 5px 2px no-repeat; }
.handle { width: 7px; height: 73px; margin: 246px 0 0 -2px; background: #dcc193; display: flex; align-items: center; justify-content: center; }
.handle i { width: 5px; height: 7px; background: #1d2122; clip-path: polygon(100% 0, 100% 100%, 0 50%); }

.status { height: 25px; flex: none; display: flex; align-items: center; margin-left: 4px; width: 1356px; border-top: 1px solid #5b5e5f; font-weight: 700; font-size: 12px; letter-spacing: -0.220px; white-space: nowrap; }
.status span { height: 14px; line-height: 14px; margin-bottom: 2px; flex: none; display: flex; align-items: center; justify-content: center; border-right: 1px solid #343432; }
.status .s1 { width: 145px; justify-content: flex-start; padding-left: 10px; }
.status .s2 { width: 143px; }
.status .s3 { width: 333px; justify-content: flex-start; padding-left: 8px; }
.status .s4 { width: 193px; padding-left: 2px; letter-spacing: -0.300px; }
.status .s5 { width: 68px; }
.status .s6, .status .s7, .status .s8 { width: 29px; }
.status .s7 { padding-left: 2px; }
.s6 svg { width: 16px; height: 11px; }
.s7 svg { width: 10px; height: 10px; }
.status .s9 { width: 194px; padding-left: 3px; letter-spacing: -0.400px; }
.status .s10 { width: 143px; }
.s10 svg { width: 141px; height: 18px; }
.status .s11 { width: 52px; border: 0; }
</style>
